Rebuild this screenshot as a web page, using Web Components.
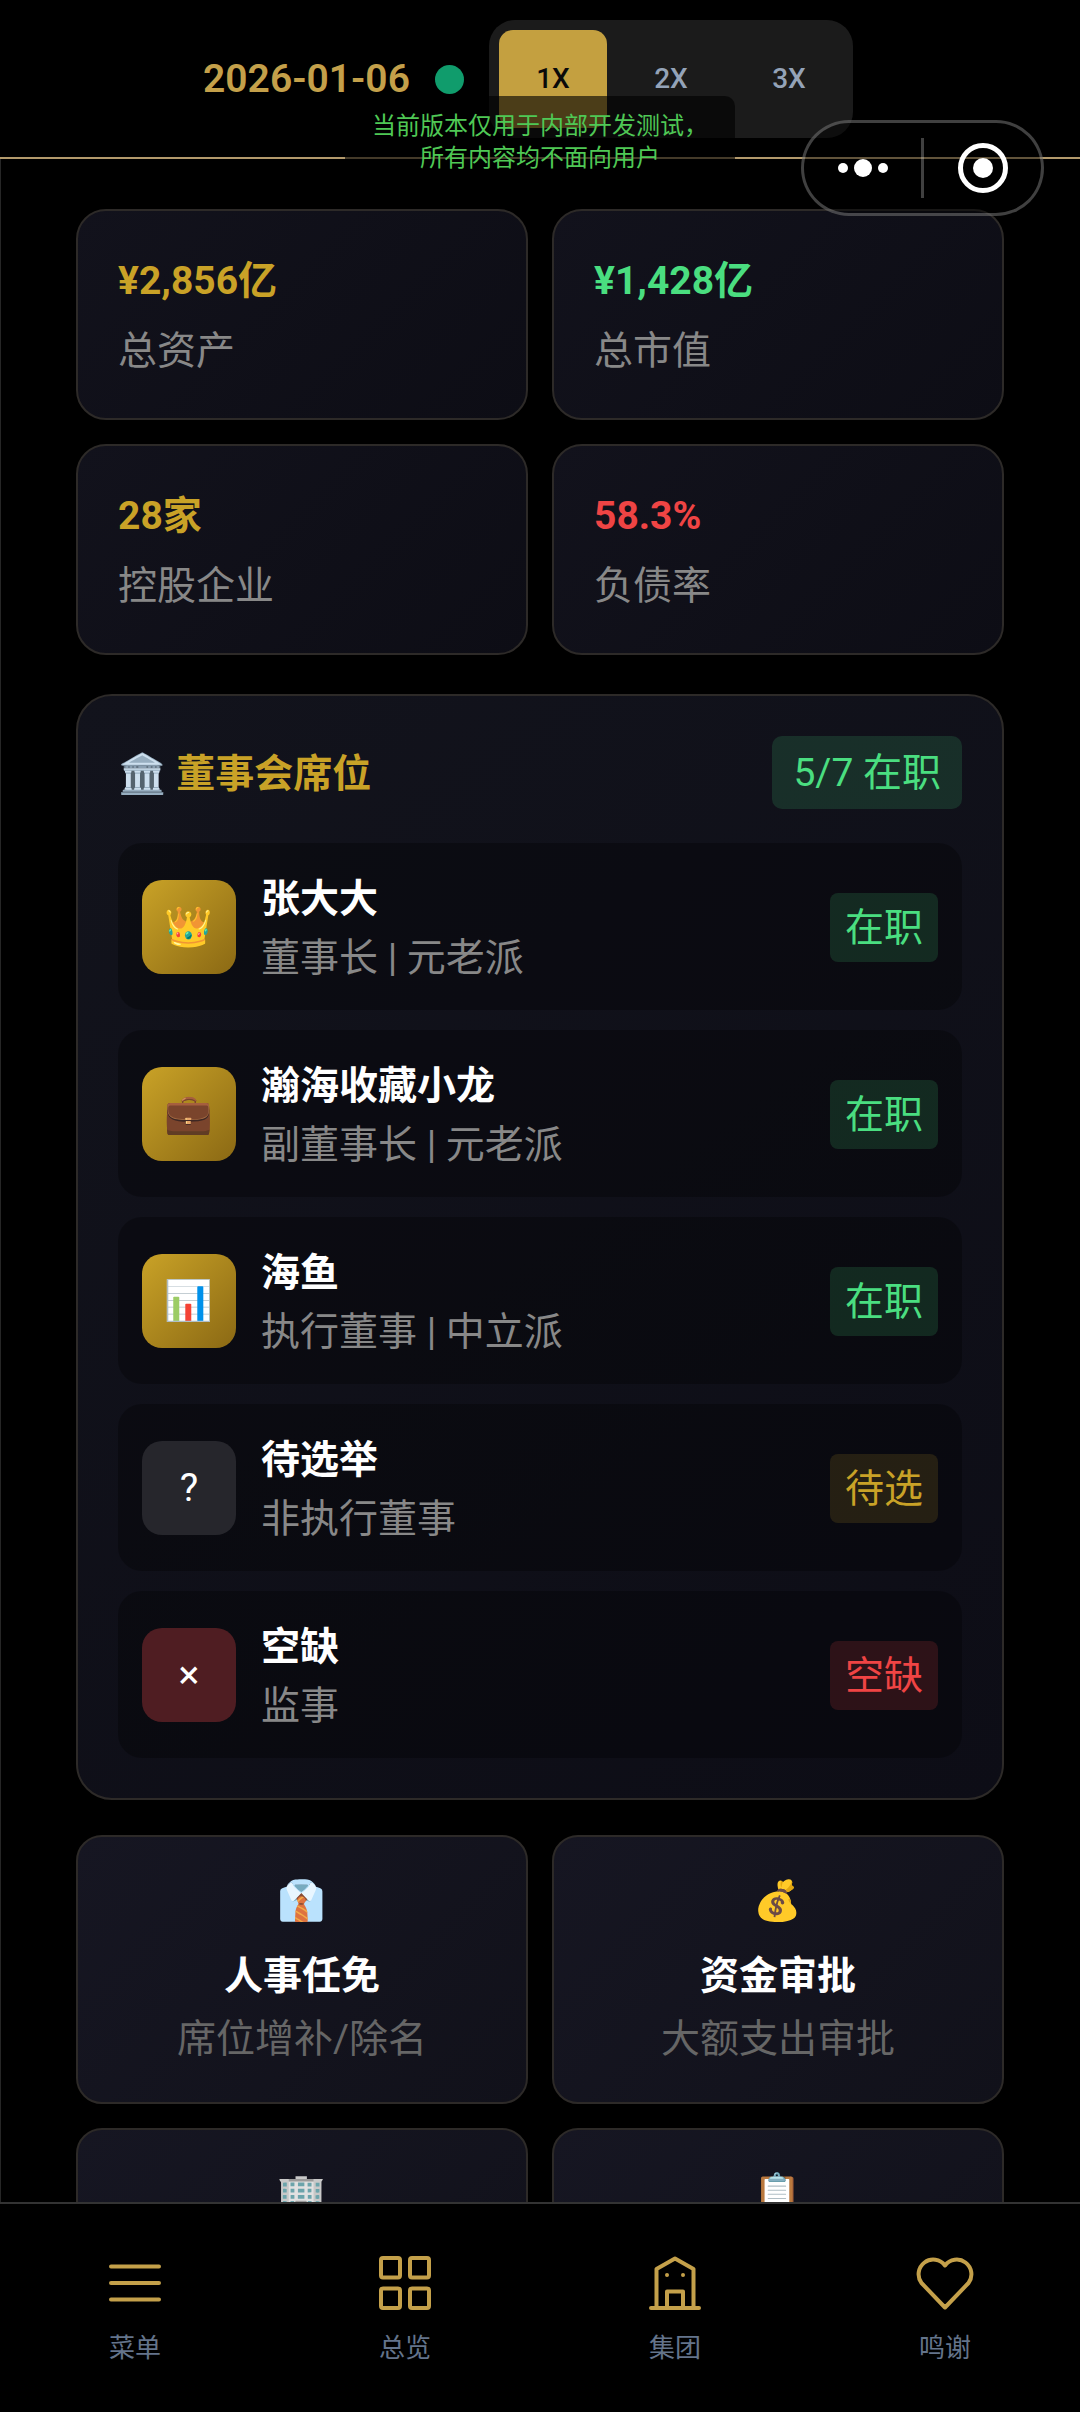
<!DOCTYPE html>
<html lang="zh-CN">
<head>
<meta charset="utf-8">
<meta name="viewport" content="width=device-width, initial-scale=1">
<title>董事会</title>
<style>
  :root {
    --gold: #c9a227;
    --line: #2d2a28;
    --green: #4ade80;
    --red: #ef4444;
  }
  body {
    margin: 0;
    background: #000;
    color: #fff;
    font-family: Roboto, "Noto Sans CJK SC", "Noto Color Emoji", sans-serif;
    font-size: 39px;
    line-height: 57px;
  }
</style>
</head>
<body>
<board-app></board-app>

<script>
const define = (name, html, setup) => {
  const template = document.createElement('template');
  template.innerHTML = html;

  customElements.define(name, class extends HTMLElement {
    constructor() {
      super();
      this.attachShadow({ mode: 'open' });
      this.shadowRoot.appendChild(template.content.cloneNode(true));
    }

    connectedCallback() {
      if (setup) setup(this, this.shadowRoot);
    }
  });
};

define('speed-switch', /* html */`
  <style>
  :host {
    display: flex;
    gap: 10px;
    padding: 10px;
    border-radius: 26px;
    background: #1b1b1b;
  }
  button {
    width: 108px;
    height: 98px;
    padding: 0;
    border: 0;
    border-radius: 14px;
    background: none;
    color: #94a3b8;
    font: 500 28px/40px Roboto, sans-serif;
  }
  button[aria-pressed="true"] {
    background: #c4a040;
    color: #0a0a0a;
  }
  </style>
  <button type="button" aria-pressed="true">1X</button>
  <button type="button" aria-pressed="false">2X</button>
  <button type="button" aria-pressed="false">3X</button>
`, (host, root) => {
  const buttons = root.querySelectorAll('button');
  buttons.forEach(button => {
    button.onclick = () => buttons.forEach(b => b.setAttribute('aria-pressed', b === button));
  });
});

define('top-bar', /* html */`
  <style>
  :host {
    display: flex;
    align-items: center;
    justify-content: center;
    gap: 25px;
    padding: 20px 24px 19px 0;
    border-bottom: 2px solid #b39a6c;
  }
  time {
    color: #c4a04a;
    font-weight: 600;
  }
  .dot {
    width: 29px;
    height: 29px;
    border-radius: 50%;
    background: #109c6c;
  }
  </style>
  <time datetime="2026-01-06">2026-01-06</time>
  <span class="dot"></span>
  <speed-switch></speed-switch>
`);

define('dev-notice', /* html */`
  <style>
  :host {
    position: absolute;
    top: 96px;
    left: 50%;
    transform: translateX(-50%);
    box-sizing: border-box;
    padding: 14px 27px;
    border-radius: 10px;
    background: rgba(0, 0, 0, .62);
    color: #4fc855;
    font-size: 24px;
    line-height: 32px;
    text-align: center;
    white-space: nowrap;
    pointer-events: none;
  }
  </style>
  <slot></slot>
`);

define('app-capsule', /* html */`
  <style>
  :host {
    position: absolute;
    top: 120px;
    right: 36px;
    box-sizing: border-box;
    display: flex;
    align-items: center;
    width: 243px;
    height: 96px;
    border: 3px solid rgba(255, 255, 255, .25);
    border-radius: 48px;
    background: rgba(0, 0, 0, .45);
  }
  button {
    flex: 1;
    display: flex;
    justify-content: center;
    padding: 0;
    border: 0;
    background: none;
  }
  i {
    width: 3px;
    height: 60px;
    background: rgba(255, 255, 255, .25);
  }
  svg {
    display: block;
    fill: #fff;
  }
  </style>
  <button type="button" aria-label="更多">
    <svg width="52" height="52" viewBox="0 0 52 52"><circle cx="6" cy="26" r="5"/><circle cx="26" cy="26" r="9"/><circle cx="46" cy="26" r="5"/></svg>
  </button>
  <i></i>
  <button type="button" aria-label="关闭">
    <svg width="52" height="52" viewBox="0 0 52 52"><circle cx="26" cy="26" r="22.5" fill="none" stroke="#fff" stroke-width="5"/><circle cx="26" cy="26" r="10"/></svg>
  </button>
`);

define('stat-card', /* html */`
  <style>
  :host {
    display: flex;
    flex-direction: column;
    gap: 13px;
    padding: 42px 40px 38px;
    border: 2px solid var(--line);
    border-radius: 30px;
    background: linear-gradient(135deg, #12121c, #0d0d15);
  }
  b {
    color: var(--tone, var(--gold));
    font-weight: 700;
  }
  :host([tone="green"]) { --tone: var(--green); }
  :host([tone="red"]) { --tone: var(--red); }
  span {
    color: #888;
  }
  </style>
  <b><slot name="value"></slot></b>
  <span><slot></slot></span>
`);

define('state-badge', /* html */`
  <style>
  :host {
    display: block;
    padding: 7px 15px 5px;
    border-radius: 8px;
    background: rgba(74, 222, 128, .15);
    color: var(--green);
    white-space: nowrap;
  }
  :host([size="large"]) {
    padding: 9px 21px 7px;
    border-radius: 10px;
  }
  :host([tone="gold"]) {
    background: rgba(201, 162, 39, .15);
    color: var(--gold);
  }
  :host([tone="red"]) {
    background: rgba(239, 68, 68, .16);
    color: var(--red);
  }
  </style>
  <slot></slot>
`);

define('board-seat', /* html */`
  <style>
  :host {
    display: flex;
    align-items: center;
    gap: 25px;
    padding: 24px 24px 23px;
    border-radius: 24px;
    background: rgba(0, 0, 0, .3);
  }
  .avatar {
    flex: none;
    display: flex;
    align-items: center;
    justify-content: center;
    width: 94px;
    height: 94px;
    border-radius: 20px;
    background: linear-gradient(135deg, #c9a227, #8b6914);
  }
  :host([kind="open"]) .avatar { background: #26262c; }
  :host([kind="vacant"]) .avatar { background: #4f1d22; }
  .who {
    flex: 1;
    display: flex;
    flex-direction: column;
    gap: 2px;
    padding-top: 4px;
  }
  .role {
    color: #888;
  }
  </style>
  <div class="avatar"><slot name="icon"></slot></div>
  <div class="who">
    <b><slot name="name"></slot></b>
    <span class="role"><slot></slot></span>
  </div>
  <slot name="state"></slot>
`);

define('board-panel', /* html */`
  <style>
  :host {
    display: block;
    padding: 40px;
    border: 2px solid var(--line);
    border-radius: 36px;
    background: linear-gradient(145deg, #12131c, #0d0d16);
  }
  header {
    display: flex;
    align-items: center;
    justify-content: space-between;
    margin-bottom: 34px;
  }
  h2 {
    margin: 0;
    padding-top: 4px;
    color: var(--gold);
    font-size: 39px;
    font-weight: 700;
  }
  .seats {
    display: grid;
    gap: 20px;
  }
  </style>
  <header>
    <h2><slot name="title"></slot></h2>
    <slot name="summary"></slot>
  </header>
  <div class="seats"><slot></slot></div>
`);

define('action-card', /* html */`
  <style>
  :host {
    display: block;
  }
  button {
    display: flex;
    flex-direction: column;
    align-items: center;
    width: 100%;
    min-height: 269px;
    padding: 36px 34px 34px;
    border: 2px solid var(--line);
    border-radius: 26px;
    background: linear-gradient(135deg, #161622, #11111a);
    color: #fff;
    font: inherit;
  }
  b {
    margin: 18px 0 6px;
  }
  .note {
    color: #666;
  }
  </style>
  <button type="button">
    <span><slot name="icon"></slot></span>
    <b><slot name="title"></slot></b>
    <span class="note"><slot></slot></span>
  </button>
`);

define('nav-link', /* html */`
  <style>
  :host {
    flex: 1;
    display: block;
  }
  a {
    display: flex;
    flex-direction: column;
    align-items: center;
    gap: 13px;
    color: #64748b;
    font-size: 26px;
    line-height: 38px;
    text-decoration: none;
  }
  ::slotted(svg) {
    display: block;
    width: 66px;
    height: 66px;
    fill: none;
    stroke: #c4a04a;
    stroke-width: 4;
    stroke-linecap: round;
    stroke-linejoin: round;
  }
  </style>
  <a href="#"><slot name="icon"></slot><span><slot></slot></span></a>
`);

define('bottom-nav', /* html */`
  <style>
  :host {
    display: flex;
    padding: 46px 0 45px;
    border-top: 2px solid #333;
    background: #000;
  }
  </style>
  <nav-link>
    <svg slot="icon" viewBox="-33 -33 66 66"><path d="M-24-16.5h48M-24 0h48M-24 16.5h48"/></svg>菜单
  </nav-link>
  <nav-link>
    <svg slot="icon" viewBox="-33 -33 66 66"><rect x="-24" y="-25" width="19" height="19.500" rx="2"/><rect x="5" y="-25" width="19" height="19.500" rx="2"/><rect x="-24" y="5.500" width="19" height="19.500" rx="2"/><rect x="5" y="5.500" width="19" height="19.500" rx="2"/></svg>总览
  </nav-link>
  <nav-link>
    <svg slot="icon" viewBox="-33 -33 66 66"><path d="M-24 25h48M-18.500 25v-39L0-24.500 18.500-14v39M-8 25V8.500H8V25M-8-8h.01M8-8h.01"/></svg>集团
  </nav-link>
  <nav-link>
    <svg slot="icon" viewBox="-33 -33 66 66"><path d="M0 24.500-23.500 0A14.600 14.600 0 0 1 0-17.500 14.600 14.600 0 0 1 23.500 0Z"/></svg>鸣谢
  </nav-link>
`);

define('board-app', /* html */`
  <style>
  :host {
    position: relative;
    display: flex;
    flex-direction: column;
    height: 100vh;
    overflow: hidden;
  }
  main {
    flex: 1;
    min-height: 0;
    overflow: hidden;
    padding: 50px 76px 0 75px;
    border-left: 1px solid #262626;
  }
  .grid {
    display: grid;
    grid-template-columns: 1fr 1fr;
    gap: 24px;
  }
  board-panel {
    margin: 39px 0 35px;
  }
  </style>
  <top-bar></top-bar>
  <main>
    <div class="grid">
      <stat-card><span slot="value">¥2,856亿</span>总资产</stat-card>
      <stat-card tone="green"><span slot="value">¥1,428亿</span>总市值</stat-card>
      <stat-card><span slot="value">28家</span>控股企业</stat-card>
      <stat-card tone="red"><span slot="value">58.3%</span>负债率</stat-card>
    </div>
    <board-panel>
      <span slot="title">🏛️ 董事会席位</span>
      <state-badge slot="summary" size="large">5/7 在职</state-badge>
      <board-seat>
        <span slot="icon">👑</span><span slot="name">张大大</span>董事长 | 元老派
        <state-badge slot="state">在职</state-badge>
      </board-seat>
      <board-seat>
        <span slot="icon">💼</span><span slot="name">瀚海收藏小龙</span>副董事长 | 元老派
        <state-badge slot="state">在职</state-badge>
      </board-seat>
      <board-seat>
        <span slot="icon">📊</span><span slot="name">海鱼</span>执行董事 | 中立派
        <state-badge slot="state">在职</state-badge>
      </board-seat>
      <board-seat kind="open">
        <span slot="icon">?</span><span slot="name">待选举</span>非执行董事
        <state-badge slot="state" tone="gold">待选</state-badge>
      </board-seat>
      <board-seat kind="vacant">
        <span slot="icon">×</span><span slot="name">空缺</span>监事
        <state-badge slot="state" tone="red">空缺</state-badge>
      </board-seat>
    </board-panel>
    <div class="grid">
      <action-card><span slot="icon">👔</span><span slot="title">人事任免</span>席位增补/除名</action-card>
      <action-card><span slot="icon">💰</span><span slot="title">资金审批</span>大额支出审批</action-card>
      <action-card><span slot="icon">🏢</span></action-card>
      <action-card><span slot="icon">📋</span></action-card>
    </div>
  </main>
  <bottom-nav></bottom-nav>
  <dev-notice>当前版本仅用于内部开发测试，<br>所有内容均不面向用户</dev-notice>
  <app-capsule></app-capsule>
`);
</script>
</body>
</html>
